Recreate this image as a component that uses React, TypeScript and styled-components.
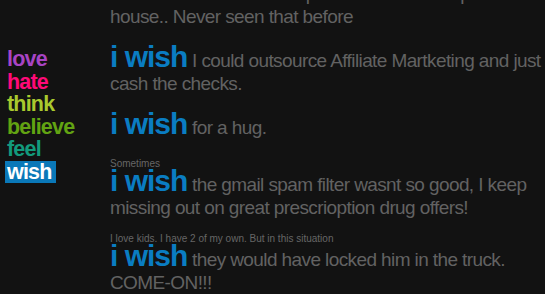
import React from "react";
import styled, { createGlobalStyle } from "styled-components";

const Global = createGlobalStyle`
  html, body { margin: 0; padding: 0; background: #121212; overflow: hidden; }
  body { font-family: "Liberation Sans", Arial, sans-serif; }
`;

const Page = styled.div`
  display: flex;
  width: 545px;
  height: 294px;
  overflow: hidden;
  background: #121212;
`;

const Sidebar = styled.ul`
  list-style: none;
  margin: 0;
  padding: 48px 0 0 7px;
  width: 103px;
  flex: none;
`;

const Verb = styled.li<{ $color: string; $active?: boolean }>`
  font-size: 21.5px;
  font-weight: bold;
  letter-spacing: -0.8px;
  line-height: 22.5px;
  color: ${(p) => (p.$active ? "#ffffff" : p.$color)};
  span {
    display: inline-block;
    background: ${(p) => (p.$active ? p.$color : "transparent")};
    padding: ${(p) => (p.$active ? "0 4px 0 2px" : "0")};
    margin-left: ${(p) => (p.$active ? "-2px" : "0")};
    line-height: 22px;
  }
`;

const Feed = styled.div`
  flex: 1;
  margin-top: -22px;
  padding-right: 3px;
  display: flex;
  flex-direction: column;
`;

const Entry = styled.div<{ $space: number }>`
  display: flex;
  flex-direction: column;
  margin-top: ${(p) => p.$space}px;
`;

const Note = styled.div`
  font-size: 10px;
  line-height: 13px;
  color: #666;
  margin-bottom: -1px;
`;

const Wish = styled.p`
  margin: 0;
  font-size: 19px;
  line-height: 23px;
  color: #626262;
  letter-spacing: -0.6px;
`;

const Lead = styled.span`
  font-size: 30px;
  font-weight: bold;
  color: #0a7dc2;
  letter-spacing: -1px;
`;

const verbs = [
  { word: "love", color: "#a844c4" },
  { word: "hate", color: "#ff0a78" },
  { word: "think", color: "#a9c92e" },
  { word: "believe", color: "#62a312" },
  { word: "feel", color: "#129a7c" },
  { word: "wish", color: "#0a78b8", active: true },
];

const entries: { note?: string; text: string; space: number }[] = [
  { space: 0, text: "had a camera phone. clouds on top of a house.. Never seen that before" },
  { space: 17, text: "I could outsource Affiliate Martketing and just cash the checks." },
  { space: 17, text: "for a hug." },
  { space: 18, note: "Sometimes", text: "the gmail spam filter wasnt so good, I keep missing out on great prescrioption drug offers!" },
  { space: 13, note: "I love kids. I have 2 of my own. But in this situation", text: "they would have locked him in the truck. COME-ON!!!" },
];

export default function App() {
  return (
    <>
      <Global />
      <Page>
        <Sidebar>
          {verbs.map((v) => (
            <Verb key={v.word} $color={v.color} $active={v.active}>
              <span>{v.word}</span>
            </Verb>
          ))}
        </Sidebar>
        <Feed>
          {entries.map((e, i) => (
            <Entry key={i} $space={e.space}>
              {e.note && <Note>{e.note}</Note>}
              <Wish>
                <Lead>i wish</Lead> {e.text}
              </Wish>
            </Entry>
          ))}
        </Feed>
      </Page>
    </>
  );
}
